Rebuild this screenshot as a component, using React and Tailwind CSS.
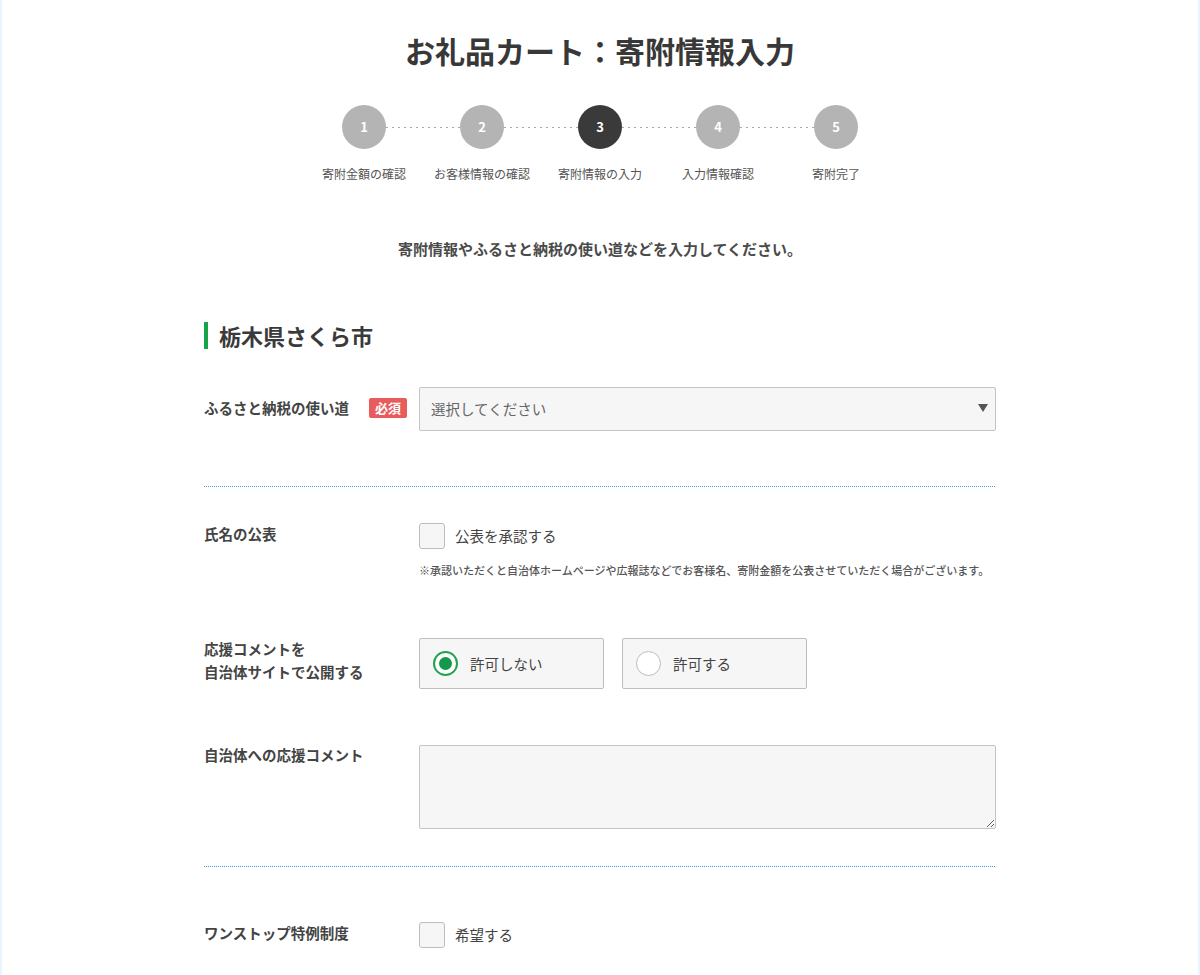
import React, { useState } from 'react';

const steps = [
  { no: 1, label: '寄附金額の確認' },
  { no: 2, label: 'お客様情報の確認' },
  { no: 3, label: '寄附情報の入力' },
  { no: 4, label: '入力情報確認' },
  { no: 5, label: '寄附完了' },
];

function Checkbox({ label, checked, onChange }) {
  return (
    <label className="flex items-center cursor-pointer">
      <span
        onClick={onChange}
        className={`w-[26px] h-[26px] rounded-[3px] border border-[#bdbdbd] bg-[#f6f6f6] flex items-center justify-center ${checked ? 'text-[#1a9e48]' : ''}`}
      >
        {checked ? '✓' : null}
      </span>
      <span className="ml-[10px] text-[14.5px] text-[#444]">{label}</span>
    </label>
  );
}

function Radio({ label, checked, onClick }) {
  return (
    <button
      type="button"
      onClick={onClick}
      className="w-[185px] h-[51px] rounded-[2px] border border-[#bdbdbd] bg-[#f6f6f6] flex items-center pl-[13px]"
    >
      <span
        className={`w-[25px] h-[25px] rounded-full flex items-center justify-center bg-white ${checked ? 'border-2 border-[#22a24f]' : 'border border-[#bdbdbd]'}`}
      >
        {checked && <span className="w-[13px] h-[13px] rounded-full bg-[#14984a]" />}
      </span>
      <span className="ml-[12px] text-[14.5px] text-[#444]">{label}</span>
    </button>
  );
}

function Divider() {
  return <div className="h-px bg-[repeating-linear-gradient(to_right,#3d9fdb_0_1px,transparent_1px_2px)]" />;
}

export default function App() {
  const [publishName, setPublishName] = useState(false);
  const [allow, setAllow] = useState('no');
  const [oneStop, setOneStop] = useState(false);

  return (
    <div className="min-h-screen bg-white border-x-2 border-[#eaf4fb] font-['Noto_Sans_CJK_JP','Noto_Sans',sans-serif] text-[#444]">
      <div className="w-[792px] mx-auto pt-[28px] pb-10">
        <h1 className="text-center text-[30px] leading-[44px] font-bold text-[#383838]">
          お礼品カート：寄附情報入力
        </h1>

        {/* stepper */}
        <div className="mt-[33px] flex justify-center items-center">
          {steps.map((s, i) => (
            <React.Fragment key={s.no}>
              {i > 0 && (
                <div className="w-[74px] h-px bg-[repeating-linear-gradient(to_right,#a8a8a8_0_2px,transparent_2px_6px)]" />
              )}
              <div
                className={`w-[44px] h-[44px] rounded-full flex items-center justify-center text-white text-[13px] font-bold ${s.no === 3 ? 'bg-[#3a3a3a]' : 'bg-[#b4b4b4]'}`}
              >
                {s.no}
              </div>
            </React.Fragment>
          ))}
        </div>
        <div className="mt-[16px] flex justify-center">
          {steps.map(s => (
            <div key={s.no} className="w-[118px] text-center text-[12px] leading-[18px] text-[#555]">
              {s.label}
            </div>
          ))}
        </div>

        <p className="mt-[55px] text-center text-[15px] leading-[22px] font-bold text-[#4a4a4a]">
          寄附情報やふるさと納税の使い道などを入力してください。
        </p>

        {/* municipality */}
        <h2 className="mt-[61px] flex items-center">
          <span className="w-[4px] h-[27px] bg-[#16a34a]" />
          <span className="ml-[11px] text-[22px] leading-[28px] font-bold text-[#3a3a3a]">栃木県さくら市</span>
        </h2>

        <div className="mt-[38px] flex items-start">
          <div className="w-[215px] pr-[12px] pt-[11px] flex items-center justify-between">
            <span className="text-[14.5px] leading-[20px] font-bold">ふるさと納税の使い道</span>
            <span className="bg-[#e95c5c] text-white text-[13px] leading-[20px] font-bold px-[6px] rounded-[2px]">必須</span>
          </div>
          <div className="relative flex-1">
            <select className="w-full h-[44px] appearance-none rounded-[2px] border border-[#c4c4c4] bg-[#f6f6f6] pl-[11px] text-[14.5px] text-[#666] outline-none">
              <option>選択してください</option>
              <option>市長におまかせ</option>
              <option>子育て支援</option>
            </select>
            <span className="pointer-events-none absolute right-[8px] top-[17px] w-0 h-0 border-x-[5px] border-x-transparent border-t-[8px] border-t-[#555]" />
          </div>
        </div>

        <div className="mt-[55px]">
          <Divider />
        </div>

        <div className="mt-[36px] flex items-start">
          <div className="w-[215px] pt-[1px] text-[14.5px] leading-[20px] font-bold">氏名の公表</div>
          <div className="flex-1">
            <Checkbox label="公表を承認する" checked={publishName} onChange={() => setPublishName(v => !v)} />
            <p className="mt-[13px] text-[11px] leading-[16px] font-medium text-[#555]">
              ※承認いただくと自治体ホームページや広報誌などでお客様名、寄附金額を公表させていただく場合がございます。
            </p>
          </div>
        </div>

        <div className="mt-[60px] flex items-start">
          <div className="w-[215px] -mt-[1px] text-[14.5px] leading-[23px] font-bold">
            応援コメントを<br />自治体サイトで公開する
          </div>
          <div className="flex gap-[18px]">
            <Radio label="許可しない" checked={allow === 'no'} onClick={() => setAllow('no')} />
            <Radio label="許可する" checked={allow === 'yes'} onClick={() => setAllow('yes')} />
          </div>
        </div>

        <div className="mt-[56px] flex items-start">
          <div className="w-[215px] text-[14.5px] leading-[20px] font-bold">自治体への応援コメント</div>
          <textarea className="flex-1 h-[84px] rounded-[2px] border border-[#c4c4c4] bg-[#f6f6f6] p-2 text-[14px] outline-none" />
        </div>

        <div className="mt-[37px]">
          <Divider />
        </div>

        <div className="mt-[55px] flex items-start">
          <div className="w-[215px] pt-[1px] text-[14.5px] leading-[20px] font-bold">ワンストップ特例制度</div>
          <Checkbox label="希望する" checked={oneStop} onChange={() => setOneStop(v => !v)} />
        </div>
      </div>
    </div>
  );
}
